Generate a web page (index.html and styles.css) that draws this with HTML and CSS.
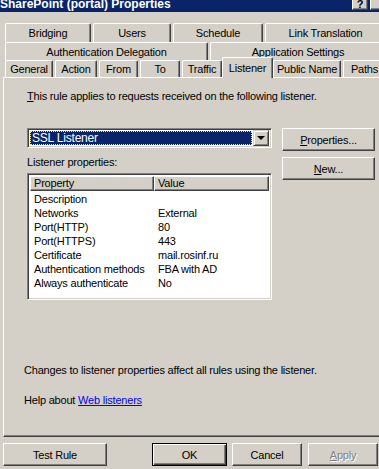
FILE: index.html
```html
<!DOCTYPE html>
<html lang="en">
<head>
  <meta charset="UTF-8">
  <title>SharePoint (portal) Properties</title>
  <link rel="stylesheet" href="styles.css">
</head>
<body>
  <div class="window">
    <div class="titlebar">
      <span class="title">SharePoint (portal) Properties</span>
      <div class="caption-buttons">
        <span class="cap-btn">?</span>
        <span class="cap-btn"></span>
      </div>
    </div>

    <div class="tabs">
      <div class="tab-row row-1">
        <div class="tab">Bridging</div>
        <div class="tab">Users</div>
        <div class="tab">Schedule</div>
        <div class="tab">Link Translation</div>
      </div>
      <div class="tab-row row-2">
        <div class="tab">Authentication Delegation</div>
        <div class="tab">Application Settings</div>
      </div>
      <div class="tab-row row-3">
        <div class="tab">General</div>
        <div class="tab">Action</div>
        <div class="tab">From</div>
        <div class="tab">To</div>
        <div class="tab">Traffic</div>
        <div class="tab active">Listener</div>
        <div class="tab">Public Name</div>
        <div class="tab">Paths</div>
      </div>
    </div>

    <div class="panel">
      <p class="intro"><u>T</u>his rule applies to requests received on the following listener.</p>

      <div class="listener-row">
        <div class="listener-main">
          <div class="combo">
            <span class="combo-value">SSL Listener</span>
            <span class="combo-drop"><span class="arrow"></span></span>
          </div>
          <div class="list-label">Listener properties:</div>
          <div class="listview">
            <div class="lv-header">
              <span class="lv-col col-name">Property</span>
              <span class="lv-col col-value">Value</span>
            </div>
            <div class="lv-row"><span class="col-name">Description</span><span class="col-value"></span></div>
            <div class="lv-row"><span class="col-name">Networks</span><span class="col-value">External</span></div>
            <div class="lv-row"><span class="col-name">Port(HTTP)</span><span class="col-value">80</span></div>
            <div class="lv-row"><span class="col-name">Port(HTTPS)</span><span class="col-value">443</span></div>
            <div class="lv-row"><span class="col-name">Certificate</span><span class="col-value">mail.rosinf.ru</span></div>
            <div class="lv-row"><span class="col-name">Authentication methods</span><span class="col-value">FBA with AD</span></div>
            <div class="lv-row"><span class="col-name">Always authenticate</span><span class="col-value">No</span></div>
          </div>
        </div>
        <div class="side-buttons">
          <button class="btn side-btn"><u>P</u>roperties...</button>
          <button class="btn side-btn"><u>N</u>ew...</button>
        </div>
      </div>

      <p class="note">Changes to listener properties affect all rules using the listener.</p>
      <p class="help-line">Help about <a href="#">Web listeners</a></p>
    </div>

    <div class="footer">
      <button class="btn btn-test">Test Rule</button>
      <button class="btn btn-ok">OK</button>
      <button class="btn btn-cancel">Cancel</button>
      <button class="btn btn-apply" disabled><u>A</u>pply</button>
    </div>
  </div>
</body>
</html>
```

FILE: styles.css
```css
body {
  margin: 0;
  background: #d4d0c8;
  font-family: "Liberation Sans", Arial, sans-serif;
  font-size: 11px;
  letter-spacing: -0.2px;
  color: #000;
  overflow: hidden;
}

.window {
  width: 386px;
  height: 469px;
}

/* title bar, cut off at the top */
.titlebar {
  height: 12px;
  background: #0a246a;
  display: flex;
  justify-content: space-between;
  overflow: hidden;
}

.title {
  color: #fff;
  font-weight: bold;
  font-size: 12px;
  letter-spacing: 0;
  line-height: 12px;
  margin-top: -2px;
}

.caption-buttons {
  display: flex;
  gap: 2px;
  margin-top: -4px;
}

.cap-btn {
  width: 14px;
  height: 12px;
  background: #d4d0c8;
  border: 1px solid;
  border-color: #fff #404040 #404040 #fff;
  box-shadow: inset -1px -1px #808080;
  font-weight: bold;
  font-size: 11px;
  line-height: 14px;
  text-align: center;
}

/* tabs */
.tabs {
  padding: 11px 0 0 5px;
}

.tab-row {
  display: grid;
  column-gap: 2px;
}

.row-1 {
  height: 19px;
  grid-template-columns: 86px 78px 90px 1fr;
}

.row-2 {
  height: 18px;
  grid-template-columns: 203px 1fr;
}

.row-3 {
  height: 17px;
  grid-template-columns: 48px 42px 39px 40px 40px 47px 68px 1fr;
}

.tab {
  border-top: 1px solid #fff;
  border-left: 1px solid #fff;
  border-right: 1px solid #404040;
  border-radius: 2px 2px 0 0;
  box-shadow: inset -1px 0 #808080;
  display: flex;
  align-items: center;
  justify-content: center;
  white-space: nowrap;
}

.tab.active {
  position: relative;
  z-index: 1;
  margin: -3px -2px -1px;
  background: #d4d0c8;
}

/* page panel */
.panel {
  margin-left: 3px;
  height: 360px;
  box-sizing: border-box;
  padding: 12px 0 0 20px;
  border-top: 1px solid #fff;
  border-left: 1px solid #fff;
  border-right: 1px solid #404040;
  border-bottom: 1px solid #404040;
  box-shadow: inset -1px -1px #808080;
}

.panel p {
  margin: 0;
  line-height: 13px;
}

.intro {
  margin-left: 3px !important;
}

.listener-row {
  display: flex;
  gap: 10px;
  margin: 25px 0 0 3px;
}

.combo {
  width: 245px;
  height: 20px;
  box-sizing: border-box;
  display: flex;
  background: #fff;
  border: 1px solid;
  border-color: #808080 #fff #fff #808080;
  box-shadow: inset 1px 1px #404040, inset -1px -1px #d4d0c8;
  padding: 2px;
  gap: 1px;
}

.combo-value {
  flex: 1;
  background: #0a246a;
  color: #fff;
  outline: 1px dotted #f0e68c;
  outline-offset: -1px;
  padding-left: 2px;
  font-size: 12px;
  line-height: 14px;
}

.combo-drop {
  width: 16px;
  height: 16px;
  margin-top: -1px;
  box-sizing: border-box;
  background: #d4d0c8;
  border: 1px solid;
  border-color: #d4d0c8 #404040 #404040 #d4d0c8;
  box-shadow: inset 1px 1px #fff, inset -1px -1px #808080;
  display: flex;
  align-items: center;
  justify-content: center;
}

.arrow {
  width: 0;
  height: 0;
  border-left: 4px solid transparent;
  border-right: 4px solid transparent;
  border-top: 4px solid #000;
}

.list-label {
  margin-top: 8px;
  line-height: 13px;
}

.listview {
  width: 245px;
  height: 127px;
  margin-top: 4px;
  box-sizing: border-box;
  background: #fff;
  border: 1px solid;
  border-color: #808080 #fff #fff #808080;
  box-shadow: inset 1px 1px #404040, inset -1px -1px #d4d0c8;
  padding: 2px 2px 0;
}

.lv-header {
  display: flex;
  height: 15px;
  margin-bottom: 1px;
}

.lv-col {
  background: #d4d0c8;
  border-top: 1px solid #fff;
  border-left: 1px solid #fff;
  border-right: 1px solid #404040;
  border-bottom: 1px solid #404040;
  box-shadow: inset -1px -1px #808080;
  line-height: 13px;
  padding-left: 3px;
  box-sizing: border-box;
}

.lv-col.col-name {
  width: 124px;
}

.lv-col.col-value {
  flex: 1;
}

.lv-row {
  display: flex;
  height: 14px;
  line-height: 14px;
}

.lv-row .col-name {
  width: 124px;
  padding-left: 4px;
  box-sizing: border-box;
  white-space: nowrap;
}

.lv-row .col-value {
  padding-left: 4px;
}

.side-buttons {
  display: flex;
  flex-direction: column;
  gap: 6px;
}

/* buttons */
.btn {
  font-family: inherit;
  font-size: 11px;
  letter-spacing: inherit;
  color: #000;
  background: #d4d0c8;
  height: 23px;
  padding: 0;
  box-sizing: border-box;
  border: 1px solid;
  border-color: #fff #404040 #404040 #fff;
  box-shadow: inset -1px -1px #808080;
  border-radius: 0;
}

.side-btn {
  width: 93px;
}

.note {
  margin-top: 64px !important;
}

.help-line {
  margin-top: 17px !important;
}

.help-line a {
  color: #0000ff;
}

.footer {
  display: flex;
  margin: 6px 0 0 3px;
}

.btn-test {
  width: 104px;
}

.btn-ok {
  width: 75px;
  margin-left: 45px;
  border: 1px solid #000;
  box-shadow: inset 1px 1px #fff, inset -1px -1px #404040, inset -2px -2px #808080;
}

.btn-cancel {
  width: 70px;
  margin-left: 5px;
}

.btn-apply {
  width: 70px;
  margin-left: 6px;
  color: #808080;
  text-shadow: 1px 1px #fff;
}
```
